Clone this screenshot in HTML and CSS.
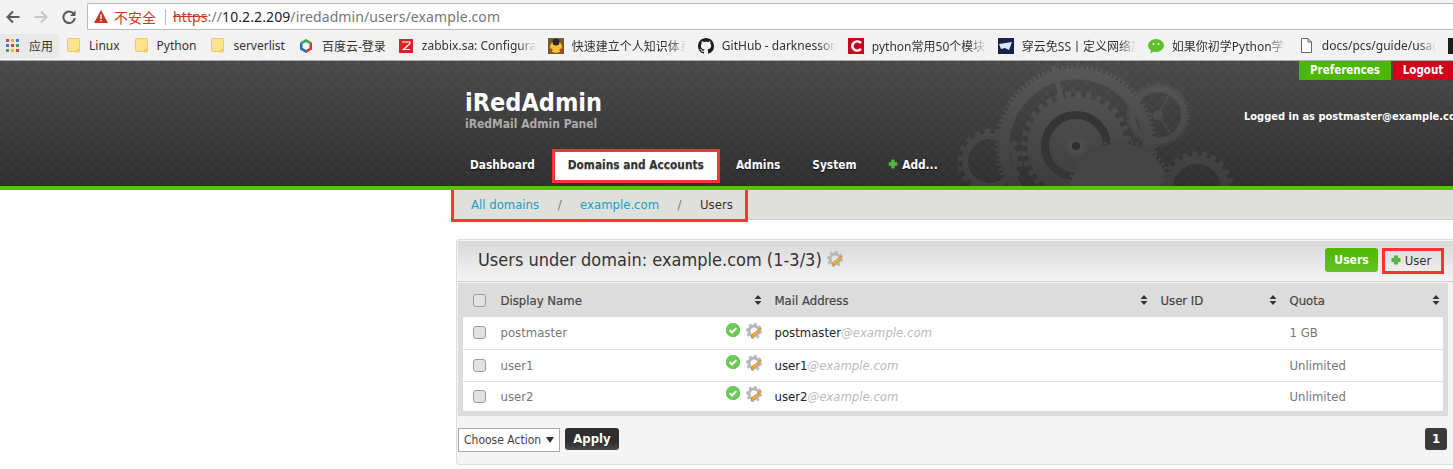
FILE: index.html
```html
<!DOCTYPE html>
<html lang="zh-CN">
<head>
  <meta charset="UTF-8">
  <title>iRedAdmin</title>
  <link rel="stylesheet" href="styles.css">
</head>
<body>
  <svg class="defs" xmlns="http://www.w3.org/2000/svg">
    <symbol id="folder" viewBox="0 0 13 15">
      <path d="M.5 1.5a1 1 0 0 1 1-1h6l4 0a1 1 0 0 1 1 1v12h-11a1 1 0 0 1-1-1z" fill="#ffe38b" stroke="#eccb5f"/>
      <rect x="9" y="11" width="3.5" height="3.5" fill="#f3d15f"/>
    </symbol>
    <symbol id="check" viewBox="0 0 14 14">
      <circle cx="7" cy="7" r="6.8" fill="#6ccb58" stroke="#46a83a" stroke-width=".6"/>
      <path d="M3.8 7.2l2.3 2.3 4.2-4.4" fill="none" stroke="#fff" stroke-width="2"/>
    </symbol>
    <symbol id="gear" viewBox="0 0 16 16">
      <circle cx="8" cy="8" r="5" fill="none" stroke="#b8b8b8" stroke-width="3"/>
      <circle cx="8" cy="8" r="7" fill="none" stroke="#b8b8b8" stroke-width="2" pathLength="16" stroke-dasharray="1 1"/>
      <path d="M14.500 5l1 1-7.500 7.500-3 1 1-3z" fill="#f4b43c" stroke="#b8741a" stroke-width=".6"/>
    </symbol>
    <symbol id="plus" viewBox="0 0 12 12">
      <path d="M4 1h4v3h3v4h-3v3h-4v-3h-3v-4h3z" fill="#58b947" stroke="#3c9a30" stroke-width=".6"/>
    </symbol>
    <symbol id="sort" viewBox="0 0 8 10">
      <path d="M4 0l3.5 4h-7zM4 10l3.5-4h-7z" fill="#333"/>
    </symbol>
  </svg>

  <div class="browser">
    <div class="toolbar">
      <svg class="nav-icon" viewBox="0 0 14 14"><path d="M13.5 7h-11M7 1.5l-5.5 5.5 5.5 5.5" fill="none" stroke="#5a5a5a" stroke-width="2"/></svg>
      <svg class="nav-icon" viewBox="0 0 14 14"><path d="M.5 7h11M7 1.5l5.500 5.500-5.500 5.500" fill="none" stroke="#c8c8c8" stroke-width="2"/></svg>
      <svg class="nav-icon" viewBox="0 0 14 14"><path d="M12 4.300a5.700 5.700 0 1 0 .8 3.700" fill="none" stroke="#5a5a5a" stroke-width="2"/><path d="M13.500 .5v5.500h-5.500z" fill="#5a5a5a"/></svg>
      <div class="address">
        <svg class="warn" viewBox="0 0 14 13"><path d="M7 0l7 13h-14z" fill="#c5391e"/><path d="M6.300 4.500h1.400v4.500h-1.400zM6.300 10h1.400v1.500h-1.400z" fill="#fff"/></svg>
        <span class="insecure">不安全</span>
        <span class="url"><s>https</s>://<b>10.2.2.209</b>/iredadmin/users/example.com</span>
      </div>
    </div>
    <div class="bookmarks">
      <div class="mark apps">
        <svg class="apps-icon" viewBox="0 0 13 13">
          <rect width="3" height="3" fill="#d9453a"/><rect x="5" width="3" height="3" fill="#f0b429"/><rect x="10" width="3" height="3" fill="#3b7de0"/>
          <rect y="5" width="3" height="3" fill="#3b7de0"/><rect x="5" y="5" width="3" height="3" fill="#d9453a"/><rect x="10" y="5" width="3" height="3" fill="#3aa757"/>
          <rect y="10" width="3" height="3" fill="#3aa757"/><rect x="5" y="10" width="3" height="3" fill="#f0b429"/><rect x="10" y="10" width="3" height="3" fill="#d9453a"/>
        </svg>
        <span>应用</span>
      </div>
      <div class="mark short"><svg class="fav-folder"><use href="#folder"/></svg><span>Linux</span></div>
      <div class="mark short"><svg class="fav-folder"><use href="#folder"/></svg><span>Python</span></div>
      <div class="mark short"><svg class="fav-folder"><use href="#folder"/></svg><span>serverlist</span></div>
      <div class="mark">
        <svg class="fav" viewBox="0 0 16 16"><path d="M8 1l6 3.500-2.500 1.500-3.500-2-3.500 2-2.500-1.500z" fill="#3fa34d"/><path d="M14 4.500v7l-6 3.500v-3l3.500-2v-4z" fill="#d9342b"/><path d="M2 4.500v7l6 3.500v-3l-3.500-2v-4z" fill="#1f6fc4"/></svg>
        <span>百度云-登录</span>
      </div>
      <div class="mark">
        <svg class="fav" viewBox="0 0 16 16"><rect x="1" y="1" width="14" height="14" fill="#d8232a"/><path d="M4 4h8v1.500l-6.500 6h6.500" fill="none" stroke="#fff" stroke-width="1.200"/></svg>
        <span class="fade">zabbix.sa: Configuration</span>
      </div>
      <div class="mark">
        <svg class="fav" viewBox="0 0 16 16"><rect width="16" height="16" fill="#7a5a2a"/><circle cx="8" cy="9" r="6" fill="#f2c230"/><circle cx="8" cy="4" r="3.500" fill="#2b2b2b"/><circle cx="3" cy="12" r="1.500" fill="#d9342b"/><circle cx="13" cy="12" r="1.500" fill="#d9342b"/></svg>
        <span class="fade">快速建立个人知识体系</span>
      </div>
      <div class="mark">
        <svg class="fav" viewBox="0 0 16 16"><path fill="#1b1f23" d="M8 0C3.580 0 0 3.580 0 8c0 3.540 2.290 6.530 5.470 7.590.4.070.55-.17.55-.38 0-.19-.01-.82-.01-1.490-2.010.37-2.530-.49-2.690-.94-.09-.23-.48-.94-.82-1.130-.28-.15-.68-.52-.01-.53.63-.01 1.080.58 1.230.82.72 1.210 1.870.87 2.330.66.07-.52.28-.87.51-1.070-1.780-.2-3.640-.89-3.640-3.950 0-.87.31-1.590.82-2.150-.08-.2-.36-1.020.08-2.120 0 0 .67-.21 2.200.82.64-.18 1.320-.27 2-.27s1.360.09 2 .27c1.530-1.040 2.200-.82 2.200-.82.44 1.100.16 1.920.08 2.120.51.56.82 1.270.82 2.150 0 3.070-1.870 3.750-3.650 3.950.29.25.54.73.54 1.480 0 1.070-.01 1.930-.01 2.200 0 .21.15.46.55.38A8.013 8.013 0 0 0 16 8c0-4.420-3.580-8-8-8z"/></svg>
        <span class="fade">GitHub - darknessomi</span>
      </div>
      <div class="mark">
        <svg class="fav" viewBox="0 0 16 16"><rect width="16" height="16" fill="#c8001e"/><path d="M13 5a5 4.500 0 1 0 0 6" fill="none" stroke="#fff" stroke-width="2.500"/></svg>
        <span class="fade">python常用50个模块</span>
      </div>
      <div class="mark">
        <svg class="fav" viewBox="0 0 16 16"><rect width="16" height="16" fill="#14244a"/><path d="M1 6l13-2-3 8-4-2-4 1z" fill="#dfe6f2"/></svg>
        <span class="fade">穿云免SS丨定义网络加速</span>
      </div>
      <div class="mark">
        <svg class="fav" viewBox="0 0 16 16"><ellipse cx="8" cy="7.500" rx="8" ry="6.500" fill="#5cc02c"/><path d="M3 12l-.5 3.500 4-2.500z" fill="#5cc02c"/><circle cx="5.500" cy="6" r="1" fill="#fff"/><circle cx="10.500" cy="6" r="1" fill="#fff"/></svg>
        <span class="fade">如果你初学Python学习</span>
      </div>
      <div class="mark doc">
        <svg class="fav-doc" viewBox="0 0 11 15"><path d="M.5.5h6.500l3.500 3.500v10.500h-10zM7 .5v3.500h3.500" fill="#fff" stroke="#666"/></svg>
        <span class="fade">docs/pcs/guide/usage</span>
      </div>
      <div class="mark"><svg class="fav" viewBox="0 0 16 16"><rect width="16" height="16" fill="#1d1d1d"/></svg></div>
    </div>
  </div>

  <header class="site-header">
    <svg class="gears" viewBox="0 0 320 125" xmlns="http://www.w3.org/2000/svg">
      <defs>
        <linearGradient id="gearfill" gradientUnits="userSpaceOnUse" x1="0" y1="0" x2="0" y2="125">
          <stop offset="0" stop-color="#5a5a5a"/><stop offset="1" stop-color="#3d3d3d"/>
        </linearGradient>
      </defs>
      <g fill="none" stroke="url(#gearfill)">
        <!-- large ring behind -->
        <circle cx="146" cy="85" r="72" stroke-width="11"/>
        <circle cx="146" cy="85" r="79" stroke-width="4" pathLength="200" stroke-dasharray="1 1"/>
        <path d="M123 5l9 34" stroke-width="5"/>
        <!-- middle gear -->
        <circle cx="146" cy="85" r="49" fill="url(#gearfill)" stroke="none"/>
        <circle cx="146" cy="85" r="52" stroke-width="6" pathLength="64" stroke-dasharray="1 1"/>
        <circle cx="146" cy="85" r="31" stroke="#353535" stroke-width="8"/>
        <circle cx="146" cy="85" r="9" fill="#4c4c4c" stroke="none"/>
        <circle cx="146" cy="85" r="10" stroke="#4c4c4c" stroke-width="3" pathLength="32" stroke-dasharray="1 1"/>
        <circle cx="146" cy="85" r="4" fill="#2f2f2f" stroke="none"/>
        <!-- right small gear -->
        <circle cx="228" cy="54" r="26" stroke-width="6"/>
        <circle cx="228" cy="54" r="30.500" stroke-width="3" pathLength="120" stroke-dasharray="1 1"/>
        <path d="M228 54l-26-2M228 54l12-22M228 54l14 20" stroke-width="1.500"/>
        <circle cx="228" cy="54" r="5" fill="url(#gearfill)" stroke="none"/>
        <!-- left gear -->
        <circle cx="60" cy="100" r="25" stroke-width="6"/>
        <circle cx="60" cy="100" r="30" stroke-width="5" pathLength="36" stroke-dasharray="1 1"/>
        <!-- front gear -->
        <circle cx="190" cy="132" r="50" fill="#454545" stroke="none"/>
        <circle cx="190" cy="132" r="52" stroke="#454545" stroke-width="3" pathLength="120" stroke-dasharray="1 1"/>
        <!-- lower right gear -->
        <circle cx="267" cy="127" r="28" stroke-width="8"/>
        <circle cx="267" cy="127" r="34" stroke-width="5" pathLength="44" stroke-dasharray="1 1"/>
      </g>
    </svg>
    <div class="top-links">
      <a class="top-link prefs">Preferences</a>
      <a class="top-link logout">Logout</a>
    </div>
    <div class="brand-row">
      <div class="brand">
        <h1>iRedAdmin</h1>
        <p>iRedMail Admin Panel</p>
      </div>
      <div class="logged-in">Logged in as postmaster@example.com</div>
    </div>
    <nav class="main-nav">
      <a>Dashboard</a>
      <a class="current">Domains and Accounts</a>
      <a>Admins</a>
      <a>System</a>
      <a><svg class="plus"><use href="#plus"/></svg> Add...</a>
    </nav>
  </header>

  <div class="breadcrumb">
    <div class="crumbs">
      <a>All domains</a><i>/</i><a>example.com</a><i>/</i><span>Users</span>
    </div>
  </div>

  <main class="box">
    <div class="box-title">
      <h2>Users under domain: example.com (1-3/3)</h2>
      <svg class="title-gear"><use href="#gear"/></svg>
      <div class="title-buttons">
        <a class="btn-users">Users</a>
        <a class="btn-add"><svg class="plus"><use href="#plus"/></svg> User</a>
      </div>
    </div>

    <table class="users">
      <colgroup>
        <col class="c-check"><col class="c-name"><col class="c-mail"><col class="c-id"><col class="c-quota">
      </colgroup>
      <thead>
        <tr>
          <th><input type="checkbox"></th>
          <th><div class="th-in">Display Name <svg class="sort"><use href="#sort"/></svg></div></th>
          <th><div class="th-in">Mail Address <svg class="sort"><use href="#sort"/></svg></div></th>
          <th><div class="th-in">User ID <svg class="sort"><use href="#sort"/></svg></div></th>
          <th><div class="th-in">Quota <svg class="sort"><use href="#sort"/></svg></div></th>
        </tr>
      </thead>
      <tbody>
        <tr>
          <td><input type="checkbox"></td>
          <td><div class="name-cell">postmaster <span class="row-icons"><svg class="ok"><use href="#check"/></svg><svg class="edit"><use href="#gear"/></svg></span></div></td>
          <td><span class="mail">postmaster</span><em>@example.com</em></td>
          <td></td>
          <td>1 GB</td>
        </tr>
        <tr>
          <td><input type="checkbox"></td>
          <td><div class="name-cell">user1 <span class="row-icons"><svg class="ok"><use href="#check"/></svg><svg class="edit"><use href="#gear"/></svg></span></div></td>
          <td><span class="mail">user1</span><em>@example.com</em></td>
          <td></td>
          <td>Unlimited</td>
        </tr>
        <tr>
          <td><input type="checkbox"></td>
          <td><div class="name-cell">user2 <span class="row-icons"><svg class="ok"><use href="#check"/></svg><svg class="edit"><use href="#gear"/></svg></span></div></td>
          <td><span class="mail">user2</span><em>@example.com</em></td>
          <td></td>
          <td>Unlimited</td>
        </tr>
      </tbody>
    </table>

    <div class="box-foot">
      <span class="action-wrap">
        <select class="action"><option>Choose Action</option></select>
      </span>
      <button class="apply">Apply</button>
      <span class="page-num">1</span>
    </div>
  </main>
</body>
</html>
```

FILE: styles.css
```css
* {
  box-sizing: border-box;
}
html, body {
  height: 469px;
  overflow: hidden;
}
body {
  margin: 0;
  width: 1453px;
  background-color: #fdfdfd;
  color: #333;
  font-family: "DejaVu Sans Condensed", "DejaVu Sans", sans-serif;
  font-stretch: condensed;
  font-size: 13px;
}
h1, h2, p {
  margin: 0;
}
.defs {
  display: none;
}

/* browser chrome */
.browser {
  height: 61px;
  background-color: #f2f2f2;
  border-bottom: 1px solid #aaa;
  font-family: "Noto Sans", "Noto Sans CJK SC", sans-serif;
  font-stretch: normal;
}
.toolbar {
  display: flex;
  height: 31px;
  padding: 3px 0 0 6px;
}
.nav-icon {
  width: 14px;
  height: 14px;
  margin: 7px 14px 0 0;
}
.address {
  display: flex;
  align-items: center;
  flex: 1;
  height: 27px;
  margin-left: -3px;
  padding-left: 6px;
  background-color: #fff;
  border: 1px solid #b9b9b9;
  border-right: 0;
  border-radius: 2px 0 0 2px;
}
.warn {
  width: 14px;
  height: 13px;
}
.insecure {
  margin-left: 6px;
  padding-right: 9px;
  border-right: 1px solid #bbb;
  color: #c5391e;
  font-size: 14px;
  line-height: 16px;
  font-family: "Noto Sans CJK SC", sans-serif;
}
.url {
  margin-left: 7px;
  color: #777;
  font-size: 14px;
  letter-spacing: .1px;
}
.url s {
  color: #c5391e;
}
.url b {
  color: #222;
  font-weight: 400;
}
.bookmarks {
  display: flex;
  align-items: center;
  height: 29px;
  font-size: 12px;
  color: #333;
}
.mark {
  display: flex;
  align-items: center;
  gap: 8px;
  flex: none;
  padding: 0 6px;
  white-space: nowrap;
}
.mark.apps {
  width: 59px;
  height: 24px;
  gap: 10px;
  background-color: #e9e9e9;
}
.mark.short {
  gap: 9px;
  padding: 0 7px 0 8px;
}
.mark.doc {
  margin-left: 3px;
}
.mark span.fade {
  display: block;
  width: 114px;
  overflow: hidden;
  -webkit-mask-image: linear-gradient(to right, #000 85%, transparent);
  mask-image: linear-gradient(to right, #000 85%, transparent);
}
.apps-icon {
  width: 13px;
  height: 13px;
}
.fav-folder {
  width: 13px;
  height: 15px;
}
.fav {
  width: 16px;
  height: 16px;
}
.fav-doc {
  width: 11px;
  height: 15px;
  margin-right: 2px;
}

/* site header */
.site-header {
  position: relative;
  height: 129px;
  overflow: hidden;
  background-color: #333;
  background-image: repeating-conic-gradient(rgba(255, 255, 255, .018) 0 25%, transparent 0 50%), linear-gradient(#4a4a4a, #2e2e2e);
  background-size: 10px 10px, auto;
  border-bottom: 4px solid #56c400;
  color: #fff;
}
.gears {
  position: absolute;
  left: 930px;
  top: 0;
  width: 320px;
  height: 125px;
}
.top-links {
  position: relative;
  display: flex;
  justify-content: flex-end;
  gap: 2px;
  height: 19px;
}
.top-link {
  display: block;
  font-size: 11.5px;
  font-weight: 700;
  line-height: 19px;
  text-align: center;
  color: #fff;
}
.prefs {
  width: 92px;
  background-color: #4ab800;
}
.logout {
  width: 60px;
  background-color: #d5001c;
}
.brand-row {
  position: relative;
  display: flex;
  padding: 8px 0 0 465px;
}
.brand {
  width: 779px;
  flex: none;
}
.brand h1 {
  font-size: 25px;
  line-height: 30px;
  font-weight: 700;
}
.brand p {
  margin-top: -1px;
  font-size: 12px;
  line-height: 14px;
  font-weight: 700;
  color: #aaa;
}
.logged-in {
  margin-top: 22px;
  flex: none;
  font-size: 11px;
  font-weight: 700;
  white-space: nowrap;
}
.main-nav {
  position: relative;
  display: flex;
  margin-top: 18px;
  padding-left: 454px;
  height: 34px;
}
.main-nav a {
  display: block;
  padding: 0 16px;
  font-size: 11.8px;
  font-weight: 700;
  line-height: 33px;
  white-space: nowrap;
  text-shadow: 0 1px 1px #111;
}
.main-nav .current {
  margin-left: 1px;
  background-color: #fff;
  color: #333;
  text-shadow: 0 1px 1px #bbb;
  outline: 3px solid #f33;
  outline-offset: -3px;
}
.plus {
  width: 10px;
  height: 10px;
}

/* breadcrumb */
.breadcrumb {
  height: 30px;
  margin-left: 454px;
  background-color: #dfe0db;
  border-bottom: 1px solid #ccc;
}
.crumbs {
  display: flex;
  align-items: center;
  width: 291px;
  height: 29px;
  padding-left: 17px;
  outline: 3px solid #f33;
  color: #333;
}
.crumbs a {
  color: #16a1c4;
}
.crumbs i {
  margin: 0 18.5px;
  font-style: normal;
  color: #777;
}

/* users box */
.box {
  width: 1010px;
  height: 226px;
  margin: 19px 0 0 456px;
  padding: 1px 0 0 1px;
  background-color: #f4f4f4;
  border: 1px solid #ddd;
  border-right: 0;
  border-radius: 4px 0 0 4px;
}
.box-title {
  display: flex;
  align-items: center;
  height: 41px;
  padding-left: 20px;
  background-image: linear-gradient(#d9d9d9, #f4f4f4);
  border-bottom: 1px solid #ccc;
}
.box-title h2 {
  margin-bottom: 4px;
  font-size: 18px;
  font-weight: 400;
}
.title-gear {
  width: 16px;
  height: 16px;
  margin: 0 0 4px 5px;
}
.title-buttons {
  display: flex;
  gap: 4px;
  margin-left: auto;
  margin-right: 22px;
}
.btn-users {
  width: 53px;
  height: 24px;
  border-radius: 3px;
  background-image: linear-gradient(#4fb800, #64c028);
  color: #fff;
  font-size: 12px;
  font-weight: 700;
  line-height: 24px;
  text-align: center;
}
.btn-add {
  width: 62px;
  height: 26px;
  padding-left: 9px;
  outline: 3px solid #f33;
  outline-offset: -3px;
  font-size: 13px;
  line-height: 26px;
}
table.users {
  width: 990px;
  margin-top: 1px;
  table-layout: fixed;
  border-collapse: collapse;
  background-color: #fff;
  border: 5px solid #dcdcdc;
  border-top: 0;
}
.c-check { width: 30px; }
.c-name { width: 274px; }
.c-mail { width: 386px; }
.c-id { width: 129px; }
.users th {
  height: 34px;
  padding: 0 10px;
  background-color: #dcdcdc;
  color: #444;
  font-size: 13px;
  font-weight: 400;
  text-align: left;
  -webkit-text-stroke: .2px #444;
}
.users th:first-child, .users td:first-child {
  padding: 0 0 0 10px;
}
.th-in, .name-cell {
  display: flex;
  justify-content: space-between;
  align-items: center;
}
.sort {
  width: 8px;
  height: 10px;
  margin-right: -7px;
}
.users td {
  height: 32px;
  padding: 0 10px;
  border-bottom: 1px solid #ddd;
  color: #777;
  font-size: 13px;
}
.users tr:last-child td {
  border-bottom: 0;
}
input[type=checkbox] {
  display: block;
  width: 13px;
  height: 13px;
  margin: 0;
  appearance: none;
  background-color: #e2e2e2;
  border: 1px solid #9c9c9c;
  border-radius: 3px;
}
.row-icons {
  display: flex;
  gap: 6px;
  margin-right: -7px;
  margin-top: -4px;
}
.ok {
  width: 14px;
  height: 14px;
}
.edit {
  width: 16px;
  height: 16px;
}
.mail {
  color: #222;
}
.users em {
  color: #bbb;
}
.box-foot {
  display: flex;
  align-items: flex-start;
  gap: 5px;
  margin: 12px 0 0 0;
  padding-right: 11px;
}
.action-wrap {
  position: relative;
  display: block;
  flex: none;
}
.action-wrap::after {
  content: "";
  position: absolute;
  right: 6px;
  top: 9px;
  border: 4px solid transparent;
  border-top: 6px solid #333;
  border-bottom: 0;
}
.action {
  display: block;
  width: 102px;
  height: 24px;
  padding-left: 5px;
  appearance: none;
  background-color: #fff;
  border: 1px solid #aaa;
  border-radius: 0;
  color: #444;
  font-family: inherit;
  font-size: 12px;
}
.apply {
  width: 54px;
  height: 22px;
  padding: 0;
  border: 0;
  border-radius: 3px;
  background-image: linear-gradient(#2e2e2e, #2e2e2e 60%, #4a4a4a);
  color: #fff;
  font-family: inherit;
  font-size: 13px;
  font-weight: 700;
}
.page-num {
  width: 22px;
  height: 22px;
  margin-left: 801px;
  border-radius: 3px;
  background-color: #3a3a3a;
  color: #fff;
  font-weight: 700;
  line-height: 22px;
  text-align: center;
}
```
